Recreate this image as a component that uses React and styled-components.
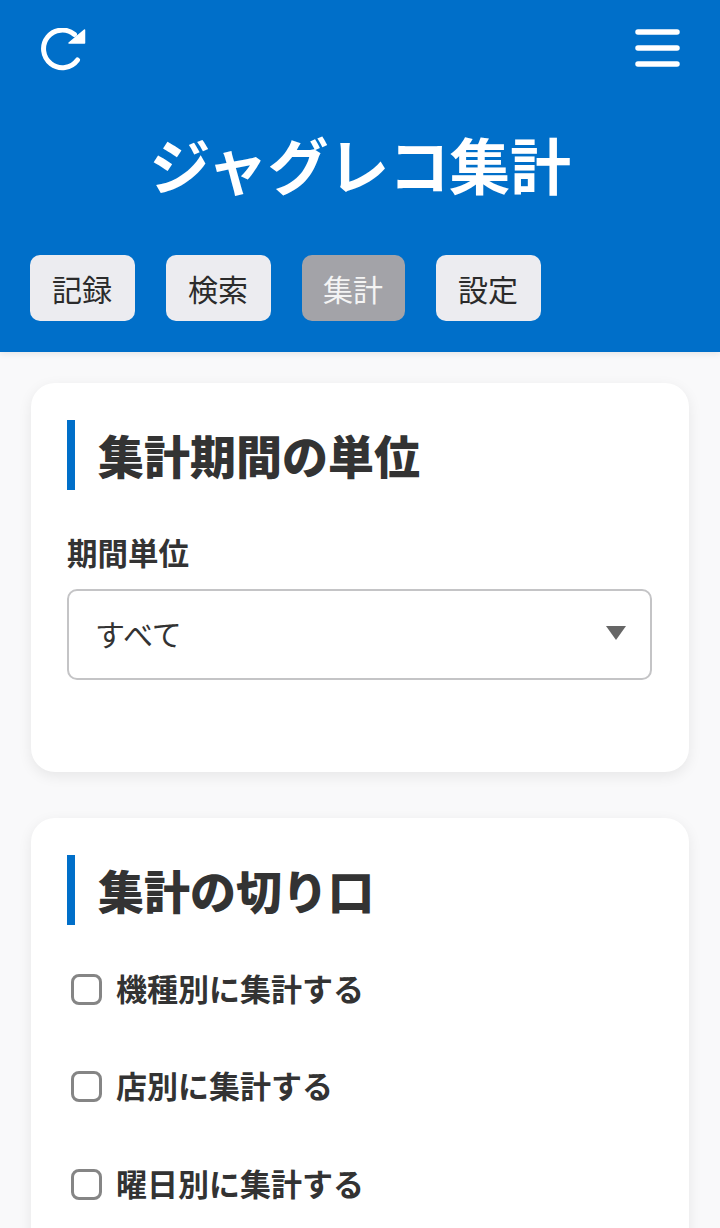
import React from 'react'
import styled, { createGlobalStyle } from 'styled-components'

const GlobalStyle = createGlobalStyle`
  html, body {
    margin: 0;
    padding: 0;
    height: 1228px;
    overflow: hidden;
    background: #f9f9fa;
    font-family: "Noto Sans CJK JP", "Noto Sans", sans-serif;
    color: #333;
  }
  * { box-sizing: border-box; }
`

const Header = styled.header`
  height: 352px;
  background: #006fc9;
  padding: 28px 40px 0 30px;
  box-shadow: 0 2px 6px rgba(0,0,0,0.08);
`

const TopBar = styled.div`
  display: flex;
  justify-content: space-between;
  align-items: flex-start;
  padding-left: 11px;
`

const IconButton = styled.button`
  display: block;
  width: 45px;
  height: 44px;
  padding: 0;
  background: none;
  border: none;
  svg { display: block; }
`

const Title = styled.h1`
  margin: 36px 0 0 -30px;
  width: 720px;
  height: 111px;
  font-size: 61px;
  line-height: 111px;
  font-weight: 700;
  color: #fff;
  text-align: center;
  letter-spacing: -0.4px;
`

const Tabs = styled.nav`
  display: flex;
  gap: 31px;
  margin-top: 36px;
`

const Tab = styled.button`
  width: ${props => props.$active ? 103 : 105}px;
  height: 66px;
  padding: 0 1px 0 0;
  border: none;
  border-radius: 10px;
  font-family: inherit;
  font-size: 30px;
  font-weight: 400;
  background: ${props => props.$active ? '#a3a3a8' : '#ececf0'};
  color: ${props => props.$active ? '#f4f4f4' : '#2b2b2b'};
`

const Main = styled.main`
  display: flex;
  flex-direction: column;
  gap: 46px;
  padding: 31px 31px 0;
`

const Card = styled.section`
  background: #fff;
  border-radius: 24px;
  padding: 37px 36px 0;
  height: ${props => props.$height}px;
  flex: none;
  box-shadow: 0 4px 14px rgba(0,0,0,0.08);
`

const Heading = styled.h2`
  margin: 0;
  height: 70px;
  border-left: 8px solid #006fc9;
  padding-left: 23px;
  font-size: 46px;
  line-height: 68px;
  font-weight: 900;
  color: #333;
`

const FieldLabel = styled.label`
  display: block;
  margin-top: 45px;
  height: 36px;
  font-size: 30.5px;
  line-height: 34px;
  font-weight: 700;
  color: #333;
`

const Select = styled.div`
  display: flex;
  align-items: center;
  justify-content: space-between;
  width: 585px;
  height: 91px;
  margin-top: 18px;
  padding: 0 24px 3px 26px;
  border: 2px solid #c4c4c6;
  border-radius: 10px;
  font-size: 30px;
  color: #333;
`

const Arrow = styled.span`
  width: 0;
  height: 0;
  border-left: 10px solid transparent;
  border-right: 10px solid transparent;
  border-top: 14px solid #666;
`

const Options = styled.div`
  display: flex;
  flex-direction: column;
  gap: 57.5px;
  margin-top: 44px;
`

const Option = styled.label`
  display: flex;
  align-items: center;
  gap: 14px;
  height: 40px;
  padding-left: 4px;
  font-size: 31px;
  line-height: 36px;
  font-weight: 700;
  color: #333;
`

const OptionText = styled.span`
  margin-top: -3px;
`

const Box = styled.span`
  flex: none;
  width: 31px;
  height: 31px;
  border: 3px solid #858585;
  border-radius: 8px;
  background: #fff;
`

const cuts = ['機種別に集計する', '店別に集計する', '曜日別に集計する']

export default function App() {
  return (
    <>
      <GlobalStyle />
      <Header>
        <TopBar>
          <IconButton aria-label="更新">
            <svg width="45" height="44" viewBox="0 0 45 44" fill="none">
              <path d="M36.500 32A18.800 18.800 0 1 1 33.500 6.500" stroke="#fff" strokeWidth="5" strokeLinecap="round" />
              <path d="M43.500 2V15H28Z" fill="#fff" stroke="#fff" strokeWidth="1.5" strokeLinejoin="round" />
            </svg>
          </IconButton>
          <IconButton aria-label="メニュー">
            <svg width="45" height="44" viewBox="0 0 45 44" fill="none">
              <path d="M3 4H42M3 20H42M3 36H42" stroke="#fff" strokeWidth="5.5" strokeLinecap="round" />
            </svg>
          </IconButton>
        </TopBar>
        <Title>ジャグレコ集計</Title>
        <Tabs>
          <Tab>記録</Tab>
          <Tab>検索</Tab>
          <Tab $active>集計</Tab>
          <Tab>設定</Tab>
        </Tabs>
      </Header>
      <Main>
        <Card $height={389}>
          <Heading>集計期間の単位</Heading>
          <FieldLabel>期間単位</FieldLabel>
          <Select>
            すべて
            <Arrow />
          </Select>
        </Card>
        <Card $height={520}>
          <Heading>集計の切り口</Heading>
          <Options>
            {cuts.map(cut => (
              <Option key={cut}>
                <Box />
                <OptionText>{cut}</OptionText>
              </Option>
            ))}
          </Options>
        </Card>
      </Main>
    </>
  )
}
